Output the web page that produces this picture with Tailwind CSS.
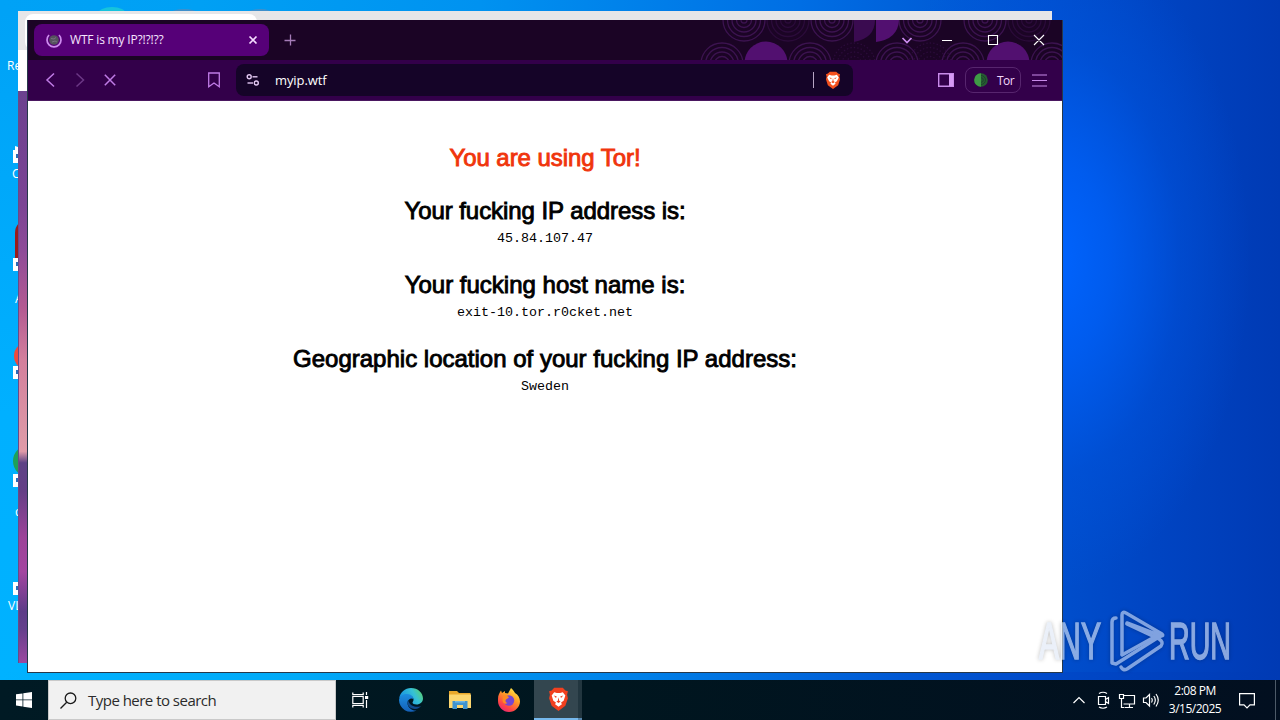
<!DOCTYPE html>
<html lang="en">
<head>
  <meta charset="UTF-8" />
  <meta name="viewport" content="width=device-width, initial-scale=1.0"/>
  <title>WTF is my IP?!?!??</title>
  <script src="https://cdn.jsdelivr.net/npm/@tailwindcss/browser@4"></script>
</head>
<body class="relative w-[1280px] h-[720px] overflow-hidden flex flex-col font-['Open_Sans','Noto_Sans',sans-serif]">

  <!-- Desktop -->
  <main class="relative flex-1 overflow-hidden bg-[radial-gradient(ellipse_200px_330px_at_1050px_260px,#0064ff_0%,#0060f8cc_30%,#0056e466_65%,transparent_100%),linear-gradient(90deg,#00a2f6_0px,#00a0f4_200px,#0092f0_480px,#006ee4_800px,#004ecc_1060px,#0044c2_1160px,#003ab4_1280px)]">
    <div class="absolute top-[11px] bottom-0 left-0 w-8 bg-[linear-gradient(180deg,#00a2f6,#00a8fa_25%,#00b0ff_60%,#00b2ff)]"></div>
    <div class="absolute left-0 bottom-0 w-[1280px] h-[8px] bg-[linear-gradient(90deg,#00b2ff_0px,#00aaf8_300px,#0080e8_640px,#0058d4_900px,#0048c8_1060px,#003ab4_1280px)]"></div>

    <!-- Desktop icons -->
    <svg class="absolute inset-0" width="1062" height="680" viewBox="0 0 1062 680">
      <ellipse cx="112" cy="14" rx="14" ry="7" fill="#16c3dc"/>
      <ellipse cx="184" cy="13" rx="13" ry="4" fill="#3f8fcb"/>
      <ellipse cx="260" cy="13" rx="12" ry="4" fill="#3f8fcb"/>
      <path d="M19 223q-4 4-4 10v27h4z" fill="#9b1c1c"/>
      <circle cx="28" cy="356" r="14" fill="#ee4a3c"/>
      <circle cx="29" cy="461" r="16" fill="#1fa05a"/>
      <g fill="#fff">
        <path d="M15 146l3 1v4h-3z"/>
        <path d="M13 150h6v13h-6zM13 258h6v13h-6zM13 366h6v13h-6zM13 474h6v13h-6zM13 582h6v13h-6z"/>
      </g>
      <g fill="#2b6cb8"><path d="M16 154h3v4h-3zM16 262h3v4h-3zM16 370h3v4h-3zM16 478h3v4h-3zM16 586h3v4h-3z"/></g>
    </svg>
    <span class="absolute left-[7px] top-[58px] text-xs leading-4 text-white">Recycle</span>
    <span class="absolute left-[12px] top-[166px] text-xs leading-4 text-white">CCl</span>
    <span class="absolute left-[15px] top-[291px] text-xs leading-4 text-white">A</span>
    <span class="absolute left-[15px] top-[504px] text-xs leading-4 text-white">qB</span>
    <span class="absolute left-[8px] top-[598px] text-xs leading-4 text-white">VLC</span>

    <!-- Background window -->
    <section class="absolute left-[18px] top-[11px] w-[1034px] h-[652px] flex flex-col bg-white">
      <div class="h-[39px] bg-[#e6e6e8] pl-[7px] pt-[3px]">
        <div class="w-[232px] h-9 rounded-lg bg-white"></div>
      </div>
      <div class="h-[41px]"></div>
      <div class="flex-1 border-l border-[#6a4a86] bg-[linear-gradient(180deg,#6c418f_0%,#7b4494_20%,#8e4b98_28%,#b35a92_38%,#d37f9c_47%,#dc97a6_60%,#e19aa8_63%,#5d4286_65%,#653f86_70%,#9c4399_78%,#a345a0_84%,#5d3c88_91%,#64408c_94%,#9c48a0_100%)]"></div>
    </section>

    <!-- Brave window -->
    <section class="absolute left-[27px] top-5 w-[1036px] h-[653px] flex flex-col border-x border-b border-[#26384a] bg-white">
      <!-- Tab strip -->
      <div class="relative h-10 shrink-0 flex items-center bg-[#1b0425] pl-1.5">
        <svg class="absolute right-0 top-0" width="362" height="40" viewBox="700 20 362 40" fill="none">
          <defs>
            <g id="rings" stroke-width="1.3">
              <circle r="21"/><circle r="16.5"/><circle r="12"/><circle r="7.5"/><circle r="3"/>
            </g>
          </defs>
          <g stroke="#3c1350">
            <use href="#rings" x="744" y="20"/><use href="#rings" x="832" y="20"/><use href="#rings" x="920" y="20"/>
            <use href="#rings" x="985" y="20"/>
            <use href="#rings" x="722" y="64"/><use href="#rings" x="810" y="64"/><use href="#rings" x="897" y="64"/>
            <use href="#rings" x="963" y="64"/><use href="#rings" x="1052" y="64"/>
          </g>
          <g stroke="#2b0b3a">
            <use href="#rings" x="788" y="20"/><use href="#rings" x="1029" y="20"/>
            <use href="#rings" x="854" y="64" stroke-dasharray="1.5 2"/><use href="#rings" x="930" y="64" stroke-dasharray="1.5 2"/>
          </g>
          <g fill="#521070">
            <path d="M854 20h21q0 18-21 22z" fill="#3a0b50"/>
            <path d="M876 20h23q-1 19-23 22z"/>
            <circle cx="766" cy="63" r="21.5"/><circle cx="1008" cy="63" r="21.5"/>
          </g>
        </svg>
        <div class="w-[235px] h-8 rounded-lg bg-[#560078] flex items-center pl-3 pr-[11px]">
          <svg width="16" height="16" viewBox="0 0 16 16" fill="none">
            <circle cx="8" cy="8" r="4.8" fill="#55525e"/>
            <path d="M5 6.500l3 .5 2-1.500M6 10l3-1 2 1" stroke="#77727f"/>
            <path d="M13 3a7 7 0 1 1-10 0" stroke="#cf8cf0" stroke-width="1.700"/>
          </svg>
          <span class="ml-2 flex-1 text-xs whitespace-nowrap tracking-[-0.18px] text-[#f6e6ff]">WTF is my IP?!?!??</span>
          <svg width="10" height="10" viewBox="0 0 10 10" stroke="#f5dcff" stroke-width="1.700"><path d="M1.500 1.500l7 7M8.500 1.500l-7 7"/></svg>
        </div>
        <svg class="ml-[15px]" width="12" height="12" viewBox="0 0 12 12" stroke="#a57cb8" stroke-width="1.300"><path d="M6.500 .5v11M.5 6.500h11"/></svg>
        <svg class="absolute right-0 top-0" width="172" height="40" viewBox="890 20 172 40" fill="none">
          <path d="M902.500 38l4.500 4.500 4.500-4.500" stroke="#cd8ef0" stroke-width="1.700"/>
          <path d="M942 40.500h10M988.500 35.500h9v9h-9zM1034 35l10 10M1044 35l-10 10" stroke="#fff" stroke-width="1.100"/>
        </svg>
      </div>

      <!-- Toolbar -->
      <div class="h-[41px] shrink-0 flex items-center bg-[#33004a] border-b border-[#4a1760] text-white">
        <svg width="208" height="40" viewBox="28 60 208 40" fill="none" stroke="#c07be6" stroke-width="1.500">
          <path d="M54 73.500L47 80l7 6.500"/>
          <path d="M76.500 73.500L83.500 80l-7 6.500" stroke="#6c3786"/>
          <path d="M104.800 74.800l10.400 10.400M115.200 74.800l-10.400 10.400"/>
          <path d="M208.700 73h10.600v13.800L214 83l-5.300 3.800z" stroke-width="1.300"/>
        </svg>
        <div class="w-[617px] h-8 rounded-lg bg-[#150428] flex items-center pl-[10px] pr-3">
          <svg width="14" height="14" viewBox="0 0 14 14" fill="none" stroke="#e3c8f2" stroke-width="1.400">
            <circle cx="3.200" cy="3.800" r="2"/><path d="M6.500 3.800h5"/><circle cx="10.300" cy="10" r="2"/><path d="M1.500 10h5.500"/>
          </svg>
          <span class="ml-[15px] mt-0.5 flex-1 text-[13px] tracking-[-0.1px]">myip.wtf</span>
          <div class="w-px h-4 bg-[#b7a5c4] mr-[11px]"></div>
          <svg width="16" height="18" viewBox="0 0 24 28">
            <path d="M7 1h10l3 3 3 1-1 4 1 4-3 9-8 6-8-6-3-9 1-4-1-4 3-1z" fill="#f4511e"/>
            <path d="M6 6l4 1h4l4-1 3 4-3 6-3 2 1 2-4 3-4-3 1-2-3-2-3-6z" fill="#fff"/>
            <path d="M6 10l4 1-1 2zM18 10l-4 1 1 2zM12 11l1 5 2 1-3 2-3-2 2-1z" fill="#f4511e"/>
          </svg>
        </div>
        <svg class="ml-[85px]" width="16" height="14" viewBox="0 0 16 14" fill="none">
          <path d="M.7.700h14.600v12.600H.7z" stroke="#c98bea" stroke-width="1.400"/><path d="M11 1h4v12h-4z" fill="#d79af5"/>
        </svg>
        <div class="ml-[11px] w-14 h-[26px] rounded-lg border border-[#57256e] flex items-center pl-2">
          <svg width="14" height="14" viewBox="0 0 14 14"><circle cx="7" cy="7" r="6.800" fill="#265c32"/><path d="M7 .200a6.800 6.800 0 0 0 0 13.600z" fill="#3f9a46"/><g fill="none" stroke="#1b3d2b" stroke-width=".8"><path d="M7 2.500a4.500 4.500 0 0 1 0 9M7 4.700a2.300 2.300 0 0 1 0 4.600"/></g></svg>
          <span class="ml-[9px] mt-px text-xs tracking-[-0.5px] text-[#f0d8fb]">Tor</span>
        </div>
        <svg class="ml-[11px]" width="15" height="13" viewBox="0 0 15 13" stroke="#c98bea" stroke-width="1.200"><path d="M0 1h15M0 6.500h15M0 12h15"/></svg>
      </div>

      <!-- Page -->
      <div class="flex-1 pt-11 text-center text-black font-['Liberation_Sans',Arial,sans-serif]">
        <h1 class="text-2xl leading-[26px] tracking-[-0.05px] text-[#f0350c] [-webkit-text-stroke:0.9px_#f0350c]">You are using Tor!</h1>
        <h2 class="mt-[27px] text-2xl leading-[26px] tracking-[-0.06px] [-webkit-text-stroke:0.9px_#000]">Your fucking IP address is:</h2>
        <p class="mt-[7px] mb-[26px] font-['Liberation_Mono',monospace] text-[13.33px] leading-[15px]">45.84.107.47</p>
        <h2 class="text-2xl leading-[26px] [-webkit-text-stroke:0.9px_#000]">Your fucking host name is:</h2>
        <p class="mt-[7px] mb-[26px] font-['Liberation_Mono',monospace] text-[13.33px] leading-[15px]">exit-10.tor.r0cket.net</p>
        <h2 class="text-2xl leading-[26px] [-webkit-text-stroke:0.9px_#000]">Geographic location of your fucking IP address:</h2>
        <p class="mt-[7px] font-['Liberation_Mono',monospace] text-[13.33px] leading-[15px]">Sweden</p>
      </div>
    </section>

    <!-- ANY.RUN watermark -->
    <svg class="absolute left-[1030px] top-[600px] drop-shadow-[0_0_2px_rgba(0,0,0,0.4)]" width="250" height="80" viewBox="1030 600 250 80" opacity=".62">
      <g fill="#dfe8f6" stroke="#dfe8f6" stroke-width="1.600" font-family="Liberation Sans" font-size="51">
        <text x="1039" y="659" textLength="62" lengthAdjust="spacingAndGlyphs">ANY</text>
        <text x="1169" y="659" textLength="62" lengthAdjust="spacingAndGlyphs">RUN</text>
      </g>
      <g fill="none" stroke="#cfdcf3" stroke-width="3.500" stroke-linejoin="round" stroke-linecap="round">
        <path d="M1116 618q-4 0-4 4v41l4 1 46-29"/>
        <path d="M1122 654v-39q0-4 4-2l36 21q2 2-1 2l-34-13"/>
        <path d="M1122 655l36-20M1121 667q2 4 6 2l34-23q3-4-2-7l-32-15"/>
      </g>
    </svg>
  </main>

  <!-- Taskbar -->
  <footer class="h-10 shrink-0 flex items-center bg-[linear-gradient(90deg,#001a24_0px,#00161f_600px,#020f20_1280px)] text-white">
    <div class="w-12 flex justify-center">
      <svg width="16" height="16" viewBox="0 0 16 16" fill="#fff"><path d="M0 2.300l6.500-.9v6.100H0zM7.300 1.300L16 0v7.500H7.300zM0 8.300h6.500v6.200L0 13.600zM7.300 8.300H16V16l-8.700-1.300z"/></svg>
    </div>
    <div class="w-72 h-10 bg-[#f1f1f1] border border-[#c9c9c9] flex items-center pl-[11px]">
      <svg width="17" height="17" viewBox="0 0 17 17" fill="none" stroke="#1a1a1a" stroke-width="1.300"><circle cx="10.500" cy="6.300" r="5.300"/><path d="M6.700 10.200L.5 16.500"/></svg>
      <span class="ml-[11px] text-[15px] whitespace-nowrap tracking-[-0.52px] text-[#2b2b2b]">Type here to search</span>
    </div>
    <div class="w-12 flex justify-center">
      <svg width="17" height="16" viewBox="0 0 17 16" fill="none" stroke="#fff" stroke-width="1.200"><path d="M.8.500v2.200h10.400V.500M.8 15.500v-2.200h10.400v2.200M.8 4.500h10.400v7H.8zM14.500 0v3M14.500 8v8"/><path d="M13 4h3.200v3H13z" fill="#fff" stroke="none"/></svg>
    </div>
    <div class="w-[52px] pl-[2px] flex justify-center">
      <svg width="24" height="24" viewBox="0 0 24 24">
        <defs>
          <linearGradient id="e1" x1="0" x2="1" y1=".4" y2="0"><stop offset="0" stop-color="#1793e0"/><stop offset=".55" stop-color="#35c1d6"/><stop offset="1" stop-color="#62d456"/></linearGradient>
          <linearGradient id="e2" x1="0" x2="0" y1="0" y2="1"><stop offset="0" stop-color="#1c8ee0"/><stop offset="1" stop-color="#1460b8"/></linearGradient>
        </defs>
        <path d="M.2 10.500C1 4.500 6 0 12 0c7 0 12 5 12 10.500 0 3.500-3 6-6.500 6-2.500 0-4-1-4-2 0-.7 1-1.200 1-3 0-2.500-2.500-4.500-6-4.500-4 0-7 1.500-8.300 3.500z" fill="url(#e1)"/>
        <path d="M0 12c.5-4 4-6.500 8.500-6 3.500.3 5.800 2.500 6 5-2-1.500-6 0-6 4 0 4.500 4.500 8 9 7.500A12 12 0 0 1 0 12z" fill="url(#e2)"/>
        <path d="M9 12c-2 5 2 9 7 9 3 0 5-1.500 6-3-1.500.800-3.500 1-5 .8-4-.5-7-3-8-6.800z" fill="#114a8b"/>
      </svg>
    </div>
    <div class="w-12 flex justify-center">
      <svg width="22" height="18" viewBox="0 0 22 18">
        <path d="M0 0h8l2 2h11.500v15H0z" fill="#e9a82b"/><path d="M0 3.500h22V17H0z" fill="#fcd66f"/>
        <path d="M3.500 10h15v8H14v-4H8v4H3.500z" fill="#3f93cf"/><path d="M6 10h10v1.500H6z" fill="#6fb6e4"/>
      </svg>
    </div>
    <div class="w-[50px] flex justify-center">
      <svg width="24" height="24" viewBox="0 0 24 24">
        <defs><linearGradient id="ff" x1=".8" x2=".2" y1="0" y2="1"><stop offset="0" stop-color="#fff04a"/><stop offset=".4" stop-color="#ff9a26"/><stop offset=".75" stop-color="#ff4545"/><stop offset="1" stop-color="#e52278"/></linearGradient></defs>
        <path d="M1 11c0-4 1.500-6 3-8.500L5 5l3-2v2l3 .5L14 0c2 2 3 3 4 5 3 1.500 5 5 5 8.500C23 19 18 24 12 24S1 19 1 13z" fill="url(#ff)"/>
        <circle cx="12" cy="12.500" r="5.200" fill="#7546d3"/>
        <path d="M6 8c3-1 5 0 6 1.500l-3 2c-1 1-.5 3 1.500 3.500-2 2-5 0-5-3z" fill="#ff8a22"/>
      </svg>
    </div>
    <div class="relative w-12 h-10 flex items-center justify-center bg-[#33464f] border-b-2 border-[#76b9ed]">
      <div class="absolute right-0 -bottom-0.5 w-1 h-10 bg-[#22363f] border-b-2 border-[#5686ad]"></div>
      <!-- Brave lion -->
      <svg width="21" height="24" viewBox="0 0 24 28">
        <path d="M7 1h10l3 3 3 1-1 4 1 4-3 9-8 6-8-6-3-9 1-4-1-4 3-1z" fill="#f1401f"/>
        <path d="M7 6l3 1h4l3-1 3 4-2 6-3 2 1 2-4 3-4-3 1-2-3-2-2-6z" fill="#fff"/>
        <path d="M6.500 10l3.500 1-1 1.800zM17.500 10l-3.500 1 1 1.800zM12 12l.8 4 1.700 1-2.500 1.600-2.500-1.600 1.700-1z" fill="#f1401f"/>
      </svg>
    </div>
    <div class="flex-1"></div>
    <!-- System tray -->
    <svg width="88" height="20" viewBox="1072 690 88 20" fill="none" stroke="#fff" stroke-width="1.200">
      <path d="M1073.500 703l5.500-5.500 5.500 5.500"/>
      <path d="M1098.500 696.500h7v8h-7zM1105.500 699.500l3-2v6l-3-2M1099 693.500q4-2.500 8 0M1099 707q4 2.500 8 0"/>
      <path d="M1124 695.500h10.500v8.500h-11M1129.500 704v3M1125 707.500h8M1119.500 694.500h4v4h-4zM1121.500 698.500v9h3"/>
      <path d="M1143.500 698h2.500l3.500-3.500v11.500l-3.500-3.500h-2.500zM1151.500 698q1.500 2 0 4.500M1153.800 696q3 4 0 8.500M1156 694q4.500 6 0 12.500"/>
    </svg>
    <div class="w-[70px] text-center text-xs leading-[18px] tracking-[-0.5px] whitespace-nowrap">
      <div>2:08 PM</div>
      <div>3/15/2025</div>
    </div>
    <svg class="ml-[9px]" width="16" height="17" viewBox="0 0 16 17" fill="none" stroke="#fff" stroke-width="1.200"><path d="M.6 1.600h14.800v11.200H11L8 15.800l-3-3H.6z"/></svg>
    <div class="ml-5 mr-1 w-px h-10 bg-[#4d5a68]"></div>
  </footer>
</body>
</html>
